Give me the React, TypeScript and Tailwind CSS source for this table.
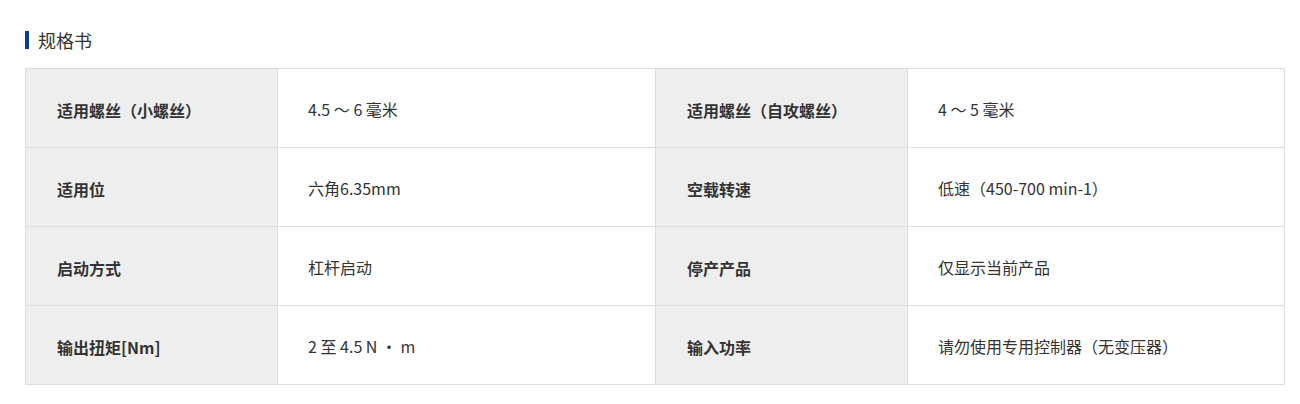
import React from 'react';

const rows: [string, string, string, string][] = [
  ['适用螺丝（小螺丝）', '4.5 ～ 6 毫米', '适用螺丝（自攻螺丝）', '4 ～ 5 毫米'],
  ['适用位', '六角6.35mm', '空载转速', '低速（450-700 min-1）'],
  ['启动方式', '杠杆启动', '停产产品', '仅显示当前产品'],
  ['输出扭矩[Nm]', '2 至 4.5 N ・ m', '输入功率', '请勿使用专用控制器（无变压器）'],
];

const App: React.FC = () => {
  return (
    <div className="min-h-[404px] bg-white font-['Noto_Sans_CJK_SC','Noto_Sans',sans-serif] text-[#333]">
      <div className="pl-[25px] pt-[29px] w-[1285px]">
        {/* Heading */}
        <div className="flex items-center h-[22px]">
          <span className="w-[4px] h-[18px] bg-[#0b3a96]" />
          <h2 className="ml-[9px] text-[18px] leading-[20px] font-normal">规格书</h2>
        </div>

        {/* Spec table */}
        <table className="mt-[17px] w-[1260px] border-collapse border border-[#dddddd] table-fixed">
          <colgroup>
            <col className="w-[252px]" />
            <col className="w-[378px]" />
            <col className="w-[252px]" />
            <col className="w-[377px]" />
          </colgroup>
          <tbody>
            {rows.map((r, i) => (
              <tr key={i} className="h-[79px]">
                <th className="border border-[#dddddd] bg-[#eeeeee] text-left font-bold text-[16px] pl-[31px] pt-[4px] align-middle">
                  {r[0]}
                </th>
                <td className="border border-[#dddddd] text-[16px] pl-[30px] pt-[1px] align-middle">{r[1]}</td>
                <th className="border border-[#dddddd] bg-[#eeeeee] text-left font-bold text-[16px] pl-[31px] pt-[4px] align-middle">
                  {r[2]}
                </th>
                <td className="border border-[#dddddd] text-[16px] pl-[30px] pt-[1px] align-middle">{r[3]}</td>
              </tr>
            ))}
          </tbody>
        </table>
      </div>
    </div>
  );
};

export default App;
